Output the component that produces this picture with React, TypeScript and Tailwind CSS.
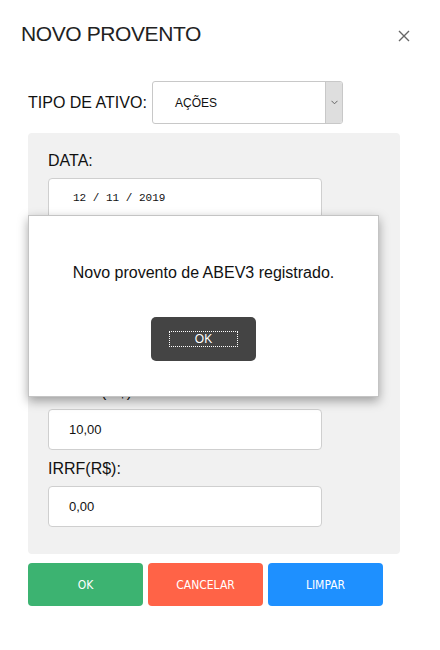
export default function App() {
  // campos do formulario (os do meio ficam atras do alerta)
  const fields = [
    { label: "DATA:", value: "12 / 11 / 2019", mono: true },
    { label: "ATIVO:", value: "ABEV3", mono: false },
    { label: "QUANTIDADE:", value: "100", mono: false },
    { label: "VALOR(R$):", value: "10,00", mono: false },
    { label: "IRRF(R$):", value: "0,00", mono: false },
  ];

  return (
    <div className="relative w-[440px] h-[650px] bg-white text-[#111] font-['Liberation_Sans',Arial,sans-serif] overflow-hidden">
      {/* HEADER */}
      <div className="flex items-start justify-between pt-[21px] pl-[21px] pr-[30px]">
        <h1 className="text-[21px] leading-[25px] tracking-[-0.4px] text-[#222]">NOVO PROVENTO</h1>
        <svg width="12" height="12" viewBox="0 0 12 12" className="mt-[9px]">
          <path d="M1 1 L11 11 M11 1 L1 11" stroke="#666" strokeWidth="1.4" />
        </svg>
      </div>

      {/* TIPO DE ATIVO */}
      <div className="flex items-center mt-[35px] pl-[28px]">
        <span className="text-[16px] leading-[20px] w-[124px]">TIPO DE ATIVO:</span>
        <div className="flex w-[191px] h-[43px] border border-[#c8c8c8] rounded-[3px] bg-white overflow-hidden">
          <div className="flex-1 flex items-center pl-[22px] text-[12px] text-[#111]">AÇÕES</div>
          <div className="w-[17px] flex items-center justify-center bg-[#dedede] border-l border-[#c8c8c8]">
            <svg width="7" height="5" viewBox="0 0 7 5">
              <path d="M0.5 0.8 L3.5 3.8 L6.5 0.8" fill="none" stroke="#666" strokeWidth="1" />
            </svg>
          </div>
        </div>
      </div>

      {/* PAINEL */}
      <div className="ml-[28px] mt-[9px] w-[372px] bg-[#f1f1f1] rounded-[4px] pt-[18px] pb-[27px] pl-[20px]">
        {fields.map((f, i) => (
          <div key={f.label} className={i < fields.length - 1 ? "mb-[9px]" : ""}>
            <div className="text-[16px] leading-[20px] mb-[7px]">{f.label}</div>
            <div
              className={`w-[274px] h-[41px] bg-white border border-[#cfcfcf] rounded-[4px] flex items-center ${
                f.mono
                  ? "pl-[24px] font-['Liberation_Mono',monospace] text-[11px]"
                  : "pl-[20px] text-[13px]"
              }`}
            >
              {f.value}
            </div>
          </div>
        ))}
      </div>

      {/* BOTOES */}
      <div className="flex gap-[5px] ml-[28px] mt-[9px] font-['DejaVu_Sans_Condensed','Liberation_Sans',sans-serif] text-[12px]">
        <button className="w-[115px] h-[43px] rounded-[4px] bg-[#3cb371] text-white">OK</button>
        <button className="w-[115px] h-[43px] rounded-[4px] bg-[#ff6347] text-white">CANCELAR</button>
        <button className="w-[115px] h-[43px] rounded-[4px] bg-[#1e90ff] text-white">LIMPAR</button>
      </div>

      {/* ALERTA */}
      <div className="absolute left-[28px] top-[215px] w-[351px] h-[182px] bg-white border border-[#c4c4c4] shadow-[0_4px_10px_rgba(0,0,0,0.35)] flex flex-col items-center pt-[47px]">
        <p className="text-[16px] leading-[20px] text-[#111]">Novo provento de ABEV3 registrado.</p>
        <button className="mt-[34px] w-[105px] h-[44px] rounded-[5px] bg-[#444] flex items-center justify-center">
          <span className="w-[69px] h-[16px] border border-dotted border-white text-white text-[12px] leading-[14px] flex items-center justify-center">
            OK
          </span>
        </button>
      </div>
    </div>
  );
}
